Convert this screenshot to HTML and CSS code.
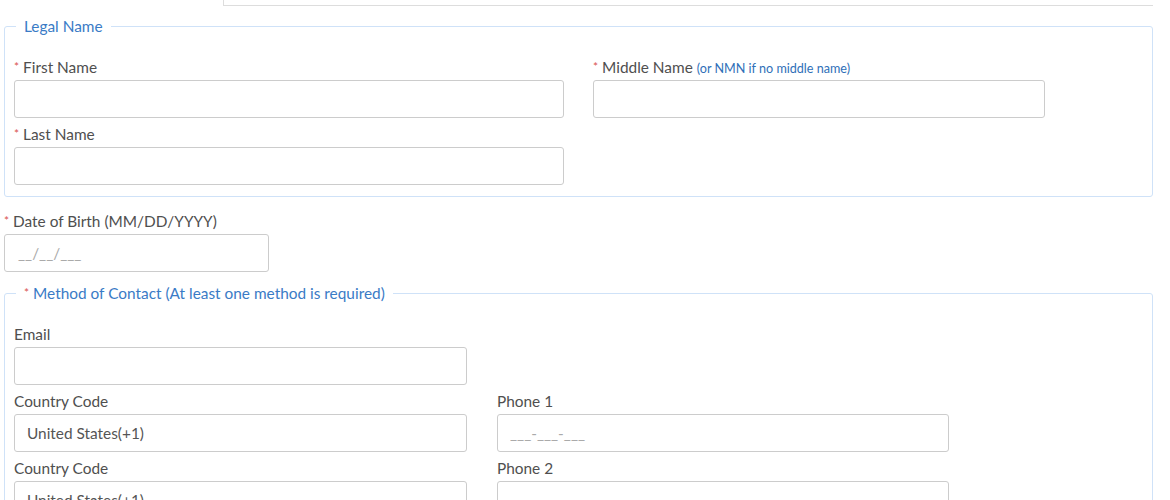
FILE: index.html
```html
<!DOCTYPE html>
<html lang="en">
<head>
  <meta charset="UTF-8">
  <meta name="viewport" content="width=device-width, initial-scale=1.0">
  <title>Applicant Information</title>
  <link rel="stylesheet" href="styles.css">
</head>
<body>
  <div class="page">
    <div class="tabs">
      <div class="tab active"></div>
      <div class="tab-fill"></div>
    </div>

    <fieldset class="group">
      <legend>Legal Name</legend>
      <div class="row legal-row">
        <div class="field">
          <label><span class="req">*</span> First Name</label>
          <input type="text">
        </div>
        <div class="field">
          <label><span class="req">*</span> Middle Name <span class="hint">(or NMN if no middle name)</span></label>
          <input type="text">
        </div>
      </div>
      <div class="row legal-row">
        <div class="field">
          <label><span class="req">*</span> Last Name</label>
          <input type="text">
        </div>
      </div>
    </fieldset>

    <div class="field dob">
      <label><span class="req">*</span> Date of Birth (MM/DD/YYYY)</label>
      <input type="text" placeholder="__/__/___">
    </div>

    <fieldset class="group">
      <legend><span class="req">*</span> Method of Contact (At least one method is required)</legend>
      <div class="row contact-row">
        <div class="field">
          <label>Email</label>
          <input type="email">
        </div>
      </div>
      <div class="row contact-row">
        <div class="field">
          <label>Country Code</label>
          <input type="text" value="United States(+1)">
        </div>
        <div class="field">
          <label>Phone 1</label>
          <input type="text" placeholder="___-___-___">
        </div>
      </div>
      <div class="row contact-row">
        <div class="field">
          <label>Country Code</label>
          <input type="text" value="United States(+1)">
        </div>
        <div class="field">
          <label>Phone 2</label>
          <input type="text">
        </div>
      </div>
    </fieldset>
  </div>
</body>
</html>
```

FILE: styles.css
```css
body {
  margin: 0;
  padding: 0;
  background-color: #fff;
  color: #4f4f4f;
  font-family: Lato, "Open Sans", sans-serif;
  font-size: 15.4px;
}
.page {
  width: 1149px;
  margin-left: 4px;
}
.tabs {
  display: flex;
  height: 6px;
}
.tab.active {
  width: 219px;
  border-right: 1px solid #ddd;
}
.tab-fill {
  flex: 1;
  border-bottom: 1px solid #ddd;
}
.group {
  margin: 10px 0 0;
  padding: 21px 9px 11px;
  border: 1px solid #cfe2f8;
  border-radius: 3px;
  min-width: 0;
}
.group legend {
  margin-left: 2px;
  padding: 0 8px;
  line-height: 20px;
  color: #3a7bc6;
}
.row {
  display: grid;
  margin-bottom: 6px;
}
.row:last-child {
  margin-bottom: 0;
}
.legal-row {
  grid-template-columns: 550px 452px;
  column-gap: 29px;
}
.contact-row {
  grid-template-columns: 453px 452px;
  column-gap: 30px;
}
.field label {
  display: block;
  height: 20px;
  line-height: 20px;
  margin-bottom: 3px;
  color: #4f4f4f;
  white-space: nowrap;
}
.field input {
  display: block;
  box-sizing: border-box;
  width: 100%;
  height: 38px;
  padding: 0 12px;
  border: 1px solid #ccc;
  border-radius: 3px;
  font-family: inherit;
  font-size: 15.4px;
  color: #555;
  background: #fff;
}
.field input::placeholder {
  color: #aaa;
}
.req {
  color: #d9534f;
  font-size: 12px;
  vertical-align: 2px;
}
.hint {
  color: #2f6fb8;
  font-size: 12.6px;
}
.dob {
  margin-top: 14px;
  width: 265px;
}
.dob input {
  padding-left: 13px;
}
.dob + .group {
  margin-top: 11px;
}
```
